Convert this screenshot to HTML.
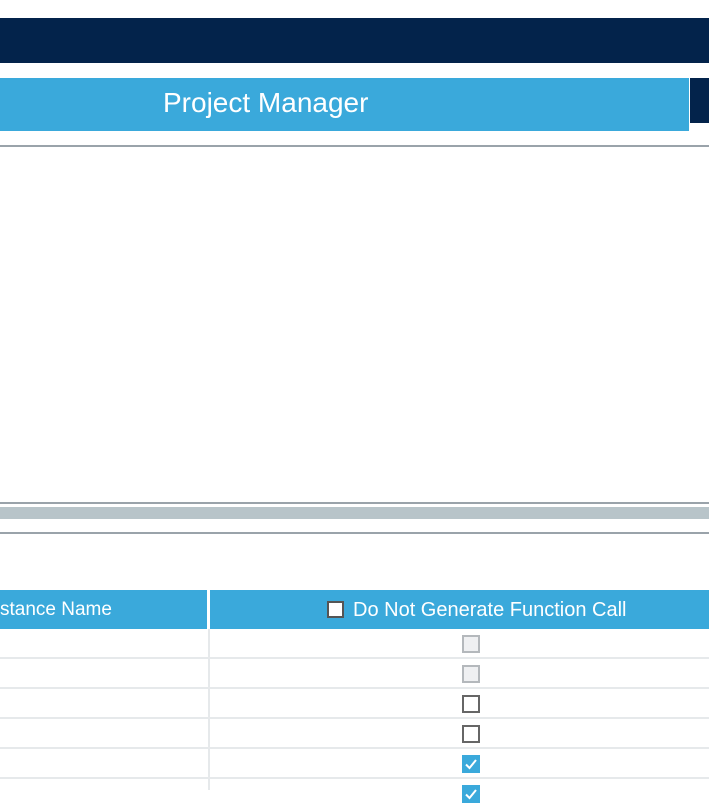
<!DOCTYPE html>
<html><head><style>
body{margin:0;width:709px;height:790px;background:#fff;position:relative;overflow:hidden;font-family:"Liberation Sans",sans-serif}
div{position:absolute;box-sizing:border-box}
.cb{width:18px;height:18px;left:462px}
.row{left:0;width:709px;height:30px;border-bottom:2px solid #e6e9eb}
</style></head><body>
<div style="left:0;top:18px;width:709px;height:45px;background:#03234b"></div>
<div style="left:0;top:78px;width:689px;height:53px;background:#3aa9db"></div>
<div style="left:690px;top:78px;width:19px;height:45px;background:#03234b"></div>
<div style="left:163px;top:86px;color:#fff;font-size:28px;line-height:34px;">Project Manager</div>
<div style="left:0;top:145px;width:709px;height:2px;background:#9aa3aa"></div>
<div style="left:0;top:502px;width:709px;height:2px;background:#9aa3aa"></div>
<div style="left:0;top:507px;width:709px;height:12px;background:#b8c4c9"></div>
<div style="left:0;top:532px;width:709px;height:2px;background:#9aa3aa"></div>
<div style="left:0;top:590px;width:207px;height:39px;background:#3aa9db"></div>
<div style="left:210px;top:590px;width:499px;height:39px;background:#3aa9db"></div>
<div style="left:0;top:598px;color:#fff;font-size:19px;line-height:24px;">stance Name</div>
<div style="left:327px;top:601px;width:17px;height:17px;background:#fff;border:2px solid #555"></div>
<div style="left:353px;top:598px;color:#fff;font-size:20px;line-height:24px;">Do Not Generate Function Call</div>
<div class="row" style="top:629px"></div>
<div class="row" style="top:659px"></div>
<div class="row" style="top:689px"></div>
<div class="row" style="top:719px"></div>
<div class="row" style="top:749px"></div>
<div style="left:208px;top:629px;width:2px;height:161px;background:#e6e9eb"></div>
<div class="cb" style="top:635px;background:#eff0f2;border:2px solid #b4b8bc"></div>
<div class="cb" style="top:665px;background:#eff0f2;border:2px solid #b4b8bc"></div>
<div class="cb" style="top:695px;background:#fff;border:2px solid #666"></div>
<div class="cb" style="top:725px;background:#fff;border:2px solid #666"></div>
<div class="cb" style="top:755px;background:#3aa9db"><svg width="18" height="18"><path d="M4 9.5 L7.5 13 L14 5" stroke="#fff" stroke-width="2" fill="none"/></svg></div>
<div class="cb" style="top:785px;background:#3aa9db"><svg width="18" height="18"><path d="M4 9.5 L7.5 13 L14 5" stroke="#fff" stroke-width="2" fill="none"/></svg></div>
</body></html>
